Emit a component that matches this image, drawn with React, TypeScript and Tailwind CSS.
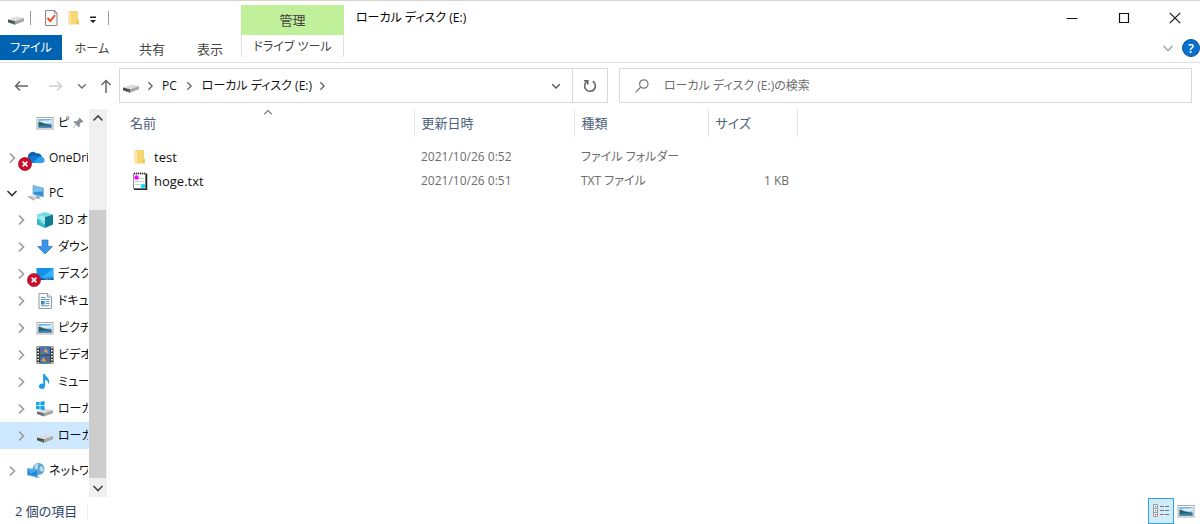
import type { ReactNode } from "react";

type IconProps = { className?: string };

function Chevron({ dir, className = "" }: { dir: "up" | "down" | "right"; className?: string }) {
  const d = { up: "M1.5 7.5 6 3l4.5 4.5", down: "M1.5 4 6 8.5 10.5 4", right: "M4 1.5 8.5 6 4 10.5" }[dir];
  return (
    <svg viewBox="0 0 12 12" className={`shrink-0 ${className}`} fill="none" stroke="currentColor" strokeWidth="1.6" aria-hidden="true">
      <path d={d} />
    </svg>
  );
}

function DriveIcon({ className = "h-[18px] w-[18px]" }: IconProps) {
  return (
    <svg viewBox="0 0 18 18" className={`shrink-0 ${className}`} aria-hidden="true">
      <path d="M1 10.5 9.5 7.500 17 9v1L8 12.200z" fill="#dcdddc" />
      <path d="M1 10.5 8 12.200v3.600l-7-2.600z" fill="#4a4e4b" />
      <path d="M8 12.200 17 9.200v3L8 15.800z" fill="#a6a7a6" />
      <path d="M5.500 13.200l1.500.4v1.200l-1.500-.5z" fill="#35c048" />
    </svg>
  );
}

function SystemDriveIcon() {
  return (
    <svg viewBox="0 0 18 18" className="h-[18px] w-[18px] shrink-0" aria-hidden="true">
      <path d="M1 11.5 9 8.5 17 10v1L8 13.2z" fill="#dcdcdc" />
      <path d="M1 11.5 8 13.2v3.3l-7-2.4z" fill="#6a6d6b" />
      <path d="M8 13.2 17 10.2v3L8 16.5z" fill="#a6a7a6" />
      <path d="M6 14l1.3.4v1L6 15z" fill="#35c048" />
      <path d="M0 2.3 3.6 1.8v3.5H0zM4.4 1.7 8.6 1v4.3H4.4zM0 6h3.6v3.5L0 9zM4.4 6h4.2v4.2l-4.2-.6z" fill="#0ea5e9" />
    </svg>
  );
}

function FolderIcon({ className = "h-4 w-4" }: IconProps) {
  return (
    <svg viewBox="0 0 16 16" className={`shrink-0 ${className}`} aria-hidden="true">
      <path d="M2.5 1H12v8.500l1 .5v4.500H3.2l-.7-.6z" fill="#f7d775" />
      <path d="M2.5 1 5 2.5v13l-2.5-1.7z" fill="#fbe7a5" />
      <path d="M11 9.5h2V14H9.500z" fill="#f1c95f" />
    </svg>
  );
}

function CheckSheetIcon() {
  return (
    <svg viewBox="0 0 16 18" className="h-[18px] w-4 shrink-0" aria-hidden="true">
      <path d="M2.5 1.5h9l2.5 2.5v12.5H2.5z" fill="#f8f8f8" stroke="#888" />
      <path d="M11.5 1.5V4H14" fill="none" stroke="#888" />
      <path d="M4.5 9 7.3 12 12 6.2" fill="none" stroke="#e8501c" strokeWidth="1.9" />
    </svg>
  );
}

function PictureIcon({ className = "h-[18px] w-[18px]" }: IconProps) {
  return (
    <svg viewBox="0 0 18 18" className={`shrink-0 ${className}`} aria-hidden="true">
      <rect x="1" y="3.5" width="16" height="11.5" fill="#fff" stroke="#a9a9a9" />
      <rect x="2.5" y="5" width="13" height="8.5" fill="#6fb4ea" />
      <path d="M2.5 7.5c4-2 8-.5 13-1.5v3.5h-13z" fill="#d8ecf7" />
      <path d="M2.5 7.800c3 0 6 2.700 13 2.900v2.8h-13z" fill="#2c5f62" />
      <path d="M2.5 12c5-1 9-1 13-.2v1.7h-13z" fill="#3a7fb8" />
    </svg>
  );
}

function ErrorBadge() {
  return (
    <svg viewBox="0 0 14 14" className="absolute -bottom-1 -left-[9px] h-3.5 w-3.5" aria-hidden="true">
      <circle cx="7" cy="7" r="6.6" fill="#c8102e" stroke="#a30d27" strokeWidth=".6" />
      <path d="m4.6 4.6 4.8 4.8m0-4.8L4.6 9.4" stroke="#fff" strokeWidth="1.5" />
    </svg>
  );
}

function CloudIcon() {
  return (
    <svg viewBox="0 0 18 18" className="h-[18px] w-[18px] shrink-0" aria-hidden="true">
      <path d="M1 9a5 5 0 0 1 8.5-4.5A4.5 4.5 0 0 1 15 8l-7 6H4a3.7 3.7 0 0 1-3-5z" fill="#0a62b8" />
      <path d="M5 7c3-1 5 0 7 1.5L6 14H4c-3 0-4-3-3-5z" fill="#1279d3" />
      <path d="M11 8.2c1.600-1.300 6-.7 6.600 2.800.2 1.800-1.300 3-2.600 3H6z" fill="#27a3ee" />
    </svg>
  );
}

function ComputerIcon() {
  return (
    <svg viewBox="0 0 18 18" className="h-[18px] w-[18px] shrink-0" aria-hidden="true">
      <path d="M6 1.500 16.500 4v9L6 10.500z" fill="#2f90da" stroke="#a8bccb" />
      <path d="M6.700 2.300 15.800 4.500v3L6.700 8z" fill="#74c1f4" />
      <path d="M9.500 11.500l3 .8v2l2 1-4-.6-2-1.200z" fill="#9aa6ae" />
      <path d="M.5 12.500 5 11.500l5.500 2.700-4 2.300z" fill="#c3ccd2" />
      <path d="M.5 12.500l6 4 .5-.5-6-4z" fill="#8b969e" />
    </svg>
  );
}

function CubeIcon() {
  return (
    <svg viewBox="0 0 18 18" className="h-[18px] w-[18px] shrink-0" aria-hidden="true">
      <path d="M1 3.500 9 1l8 2.500L9 6z" fill="#72dbe6" />
      <path d="M1 3.500 9 6v11l-8-3.500z" fill="#35b9cc" />
      <path d="M17 3.500 9 6v11l8-3.500z" fill="#117d95" />
      <path d="M1 3.500 9 6v4L1 8z" fill="#8de4ea" />
      <path d="M4.500 4.500 9 6v7.500l-4.500-2z" fill="#c5f2f5" opacity=".6" />
    </svg>
  );
}

function DownloadIcon() {
  return (
    <svg viewBox="0 0 18 18" className="h-[18px] w-[18px] shrink-0" aria-hidden="true">
      <path d="M6 2h6v6.500h4.500L9 16 1.500 8.500H6z" fill="#3b95e4" stroke="#2c7ac5" strokeWidth=".7" />
    </svg>
  );
}

function DesktopIcon() {
  return (
    <svg viewBox="0 0 18 18" className="h-[18px] w-[18px] shrink-0" aria-hidden="true">
      <rect x=".5" y="3" width="17" height="12" fill="#1491e8" />
      <path d="M17 3.500v8L5 13z" fill="#36b3f8" />
      <path d="M.5 13.500h17V15H.5z" fill="#0b5ba2" />
      <path d="M9 14h6" stroke="#bce3fb" strokeWidth=".8" strokeDasharray="1 1" />
    </svg>
  );
}

function DocumentIcon() {
  return (
    <svg viewBox="0 0 18 18" className="h-[18px] w-[18px] shrink-0" aria-hidden="true">
      <path d="M3 1.500h8.500L15.500 5v11.500H3z" fill="#fafafa" stroke="#929ba2" />
      <path d="M11.500 1.500V5h4" fill="#dfe6eb" stroke="#929ba2" />
      <path d="M5 5.500h4.500M5 7.500h8.500M9.500 9.500h4M9.500 11.500h4M5 13.800h8.500" stroke="#5d9ccc" strokeWidth="1.100" />
      <path d="M5 9h3.500v3.500H5z" fill="#3d86bf" />
    </svg>
  );
}

function FilmIcon() {
  return (
    <svg viewBox="0 0 18 18" className="h-[18px] w-[18px] shrink-0" aria-hidden="true">
      <path d="M.5.500h17v17H.5z" fill="#3a3a3a" />
      <path d="M4 .5h10v8H4z" fill="#3d78bd" />
      <path d="M4 9.500h10v8H4z" fill="#3a6cae" />
      <path d="M9.500 2 12.500 7 8 6zM5 15l3-4 2 5z" fill="#e9a13d" />
      <path d="M10 11l3 1-1 3zM5 2l2 1-1 3z" fill="#c94734" />
      <path d="M4 7h4v1.500H4zM10 16h4v1.500h-4z" fill="#4f9256" />
      <path d="M2.200 1v16M15.800 1v16" stroke="#eee" strokeWidth="1.700" strokeDasharray="1.600 1.400" />
    </svg>
  );
}

function MusicIcon() {
  return (
    <svg viewBox="0 0 18 18" className="h-[18px] w-[18px] shrink-0" aria-hidden="true">
      <path d="M7.200 1H9c.3 3 4.500 3.800 4.300 8-.1 1-.5 1.800-1 2.300.4-2.800-1.300-4-3.300-4.500v6.700a3 2.600 0 1 1-1.800-2.600z" fill="#189ded" />
    </svg>
  );
}

function NetworkIcon() {
  return (
    <svg viewBox="0 0 18 18" className="h-[18px] w-[18px] shrink-0" aria-hidden="true">
      <circle cx="11.500" cy="7" r="6" fill="#5aa3cf" />
      <path d="M7 3.500c2-2 4-2 5-1.500l-1.500 2.500 1 2-3 1zM13 4l3 1 1 3-2 2-2.500-2z" fill="#b5dcea" />
      <path d="M8 14h3.500l1.500 2H8z" fill="#b6bec4" />
      <path d="M.5 6.500 10.500 8v7L.5 13z" fill="#1f87da" stroke="#6fb2e0" strokeWidth=".8" />
      <path d="M1 7 10 8.500 3 12z" fill="#45a9f0" />
    </svg>
  );
}

function PinIcon() {
  return (
    <svg viewBox="0 0 12 12" className="h-3 w-3 shrink-0 text-[#84919c]" aria-hidden="true">
      <path d="M7.500.500 11.500 4.500l-1 .8-.8-.2-2 2 .1 2.300-1 .8L4.300 7.700 1 11.200.6 11 4 7.300 1.500 5l.9-.9 2.300.1 2.200-2-.2-.8z" fill="currentColor" />
    </svg>
  );
}

function TextFileIcon() {
  return (
    <svg viewBox="0 0 16 18" className="h-[18px] w-4 shrink-0" aria-hidden="true">
      <path d="M1.500 1.500h12v15h-12z" fill="#fff" stroke="#8c8c8c" />
      <path d="M14.500 1.500v16H2" fill="none" stroke="#222" strokeWidth="1.500" />
      <path d="M2 1.500h12" stroke="#444" strokeWidth="2" strokeDasharray="1 1" />
      <path d="M6 6.500h6M3 9.500h9M3 12.500h6" stroke="#ccc" />
      <circle cx="4.500" cy="5.500" r="2.200" fill="#f0f" />
      <circle cx="11" cy="14" r="2.200" fill="#00e5f5" />
    </svg>
  );
}

type TreeNode = {
  label: string;
  icon: ReactNode;
  level: 1 | 2;
  open?: boolean;
  error?: boolean;
  pinned?: boolean;
  selected?: boolean;
  space?: string;
};

const tree: TreeNode[] = [
  { label: "ピクチャ", icon: <PictureIcon />, level: 2, pinned: true },
  { label: "OneDrive", icon: <CloudIcon />, level: 1, error: true, space: "mt-2" },
  { label: "PC", icon: <ComputerIcon />, level: 1, open: true, space: "mt-2" },
  { label: "3D オブジェクト", icon: <CubeIcon />, level: 2 },
  { label: "ダウンロード", icon: <DownloadIcon />, level: 2 },
  { label: "デスクトップ", icon: <DesktopIcon />, level: 2, error: true },
  { label: "ドキュメント", icon: <DocumentIcon />, level: 2 },
  { label: "ピクチャ", icon: <PictureIcon />, level: 2 },
  { label: "ビデオ", icon: <FilmIcon />, level: 2 },
  { label: "ミュージック", icon: <MusicIcon />, level: 2 },
  { label: "ローカル ディスク (C:)", icon: <SystemDriveIcon />, level: 2 },
  { label: "ローカル ディスク (E:)", icon: <DriveIcon />, level: 2, selected: true },
  { label: "ネットワーク", icon: <NetworkIcon />, level: 1, space: "mt-2" },
];

function TreeRow({ node }: { node: TreeNode }) {
  return (
    <li className={node.space ?? ""}>
      <button
        type="button"
        className={`flex h-[27px] w-full items-center overflow-hidden pr-px text-left whitespace-nowrap ${node.level === 1 ? "pl-1.5" : "pl-[15px]"} ${node.selected ? "bg-[#cde8ff]" : ""}`}
      >
        {node.pinned ? (
          <span className="w-3 shrink-0" />
        ) : (
          <Chevron dir={node.open ? "down" : "right"} className={`h-3 w-3 ${node.open ? "text-[#333]" : "text-[#9a9a9a]"}`} />
        )}
        <span className="relative ml-[9px] shrink-0">
          {node.icon}
          {node.error && <ErrorBadge />}
        </span>
        <span className={`ml-1 overflow-hidden ${node.pinned ? "w-3 shrink-0" : ""}`}>{node.label}</span>
        {node.pinned && <span className="ml-0.5"><PinIcon /></span>}
      </button>
    </li>
  );
}

const files = [
  { name: "test", icon: <FolderIcon className="h-[18px] w-4" />, date: "2021/10/26 0:52", kind: "ファイル フォルダー", size: "" },
  { name: "hoge.txt", icon: <TextFileIcon />, date: "2021/10/26 0:51", kind: "TXT ファイル", size: "1 KB" },
];

const columns = [
  { label: "名前", width: "w-[292px]", pad: "pl-2" },
  { label: "更新日時", width: "w-[160px]", pad: "pl-[7px]" },
  { label: "種類", width: "w-[134px]", pad: "pl-[7px]" },
  { label: "サイズ", width: "w-[89px]", pad: "pl-[7px]" },
];

function Header() {
  return (
    <header className="flex h-[62px] border-b border-[#e4e4e4]">
      <div className="flex w-[241px] flex-col">
        <div className="flex h-[34px] items-center pl-[7px]">
          <DriveIcon />
          <span className="ml-[5px] h-3.5 w-px bg-[#999]" />
          <button type="button" aria-label="プロパティ" className="ml-3"><CheckSheetIcon /></button>
          <button type="button" aria-label="新しいフォルダー" className="ml-[7px]"><FolderIcon className="h-[18px] w-4" /></button>
          <button type="button" aria-label="クイック アクセス ツール バーのカスタマイズ" className="ml-[7px]">
            <svg viewBox="0 0 8 8" className="mt-1 h-2 w-2" aria-hidden="true">
              <path d="M1 .5h6V2H1zM1 4h6L4 7z" fill="#222" />
            </svg>
          </button>
          <span className="ml-[11px] h-3.5 w-px bg-[#999]" />
        </div>
        <div className="flex h-[25px] items-stretch text-[#444]">
          <button type="button" className="w-[62px] bg-[#0063b1] text-white">ファイル</button>
          <button type="button" className="w-[60px] pt-0.5">ホーム</button>
          <button type="button" className="w-[60px] pt-0.5 text-[13px]">共有</button>
          <button type="button" className="w-[56px] pt-0.5 text-[13px]">表示</button>
        </div>
      </div>
      <div className="mt-1 flex w-[103px] flex-col">
        <span className="flex h-[30px] items-center justify-center bg-[#c1f09b] text-[13px] text-[#444]">管理</span>
        <button type="button" className="h-[22px] border-x border-[#e0e0e0] pt-0.5 whitespace-nowrap text-[#444]">ドライブ ツール</button>
      </div>
      <div className="flex flex-1 flex-col">
        <div className="flex h-[34px] items-center pl-3 text-black">
          <h1 className="flex-1">ローカル ディスク (E:)</h1>
          <button type="button" aria-label="最小化" className="flex w-[52px] justify-center">
            <svg viewBox="0 0 12 12" className="h-3 w-3" aria-hidden="true"><path d="M.5 6.500h11" stroke="#111" /></svg>
          </button>
          <button type="button" aria-label="最大化" className="flex w-[52px] justify-center">
            <svg viewBox="0 0 12 12" className="h-3 w-3" aria-hidden="true"><path d="M1.500 1.500h9v9h-9z" fill="none" stroke="#111" strokeWidth="1.200" /></svg>
          </button>
          <button type="button" aria-label="閉じる" className="flex w-[50px] justify-center">
            <svg viewBox="0 0 12 12" className="h-3 w-3" aria-hidden="true"><path d="m.8.8 10.400 10.400m0-10.400L.8 11.200" stroke="#111" strokeWidth="1.200" /></svg>
          </button>
        </div>
        <div className="flex h-[26px] items-center justify-end">
          <button type="button" aria-label="リボンの展開" className="mr-2 text-[#aaa]"><Chevron dir="down" className="h-3 w-3" /></button>
          <button type="button" aria-label="ヘルプ" className="flex h-[18px] w-[18px] items-center justify-center rounded-full border border-[#0b559b] bg-[#0870cc] text-[13px] font-semibold text-white">?</button>
        </div>
      </div>
    </header>
  );
}

function AddressBar() {
  return (
    <div className="grid grid-cols-[119px_minmax(0,489fr)_11px_minmax(0,573fr)] items-center pt-[5px] pr-2 pb-1.5">
      <div className="flex items-center pl-3.5 text-[#666]">
        <button type="button" aria-label="戻る">
          <svg viewBox="0 0 14 14" className="h-3.5 w-3.5" fill="none" stroke="currentColor" strokeWidth="1.500" aria-hidden="true"><path d="M14 7H1.500M6 2.500 1.500 7 6 11.500" /></svg>
        </button>
        <button type="button" aria-label="進む" className="ml-[21px] text-[#d0d0d0]">
          <svg viewBox="0 0 14 14" className="h-3.5 w-3.5" fill="none" stroke="currentColor" strokeWidth="1.500" aria-hidden="true"><path d="M0 7h12.500M8 2.500 12.500 7 8 11.500" /></svg>
        </button>
        <button type="button" aria-label="最近表示した場所" className="ml-3.5"><Chevron dir="down" className="h-2.5 w-2.5" /></button>
        <button type="button" aria-label="上へ" className="ml-3">
          <svg viewBox="0 0 14 14" className="h-3.5 w-3.5" fill="none" stroke="currentColor" strokeWidth="1.500" aria-hidden="true"><path d="M7 14V1.500M2.500 6 7 1.500 11.500 6" /></svg>
        </button>
      </div>
      <nav aria-label="アドレス" className="flex h-[35px] items-stretch border border-[#d9d9d9]">
        <div className="flex flex-1 items-center pl-0.5 text-[#111]">
          <DriveIcon />
          <Chevron dir="right" className="ml-[5px] h-2.5 w-2.5 text-[#666]" />
          <button type="button" className="ml-[7px]">PC</button>
          <Chevron dir="right" className="ml-[7px] h-2.5 w-2.5 text-[#666]" />
          <button type="button" className="ml-2 whitespace-nowrap">ローカル ディスク (E:)</button>
          <Chevron dir="right" className="ml-[5px] h-2.5 w-2.5 text-[#666]" />
          <button type="button" aria-label="以前の場所" className="mr-[11px] ml-auto text-[#555]"><Chevron dir="down" className="h-2.5 w-2.5" /></button>
        </div>
        <button type="button" aria-label="最新の情報に更新" className="flex w-[35px] items-center justify-center border-l border-[#d9d9d9]">
          <svg viewBox="0 0 14 14" className="h-3.5 w-3.5" fill="none" stroke="#666" strokeWidth="1.600" aria-hidden="true">
            <path d="M9.800 2.300a5.400 5.400 0 1 1-5.800.1M1 1.700h3.800v3.800" />
          </svg>
        </button>
      </nav>
      <label className="col-start-4 flex h-[35px] items-center border border-[#d9d9d9] pl-[15px]">
        <svg viewBox="0 0 14 14" className="h-3.5 w-3.5 shrink-0" fill="none" stroke="#777" strokeWidth="1.200" aria-hidden="true">
          <circle cx="8.800" cy="5" r="4.200" /><path d="M5.800 8 .6 13.300" />
        </svg>
        <input type="search" aria-label="検索" placeholder="ローカル ディスク (E:)の検索" className="ml-[15px] min-w-0 flex-1 outline-none placeholder:text-[#6d6d6d]" />
      </label>
    </div>
  );
}

export default function App() {
  return (
    <div className="flex min-h-screen flex-col border-t border-[#d8d4cb] bg-white font-['Open_Sans','Noto_Sans_CJK_JP',sans-serif] text-[12px] leading-[18px] text-[#111] [font-feature-settings:'palt']">
      <Header />
      <AddressBar />
      <div className="flex flex-1">
        <aside className="flex w-[107px] shrink-0">
          <ul className="w-[89px] shrink-0">
            {tree.map((node, i) => <TreeRow key={i} node={node} />)}
          </ul>
          <div className="flex w-[18px] flex-col bg-[#f0f0f0] text-[#444]">
            <button type="button" aria-label="上にスクロール" className="flex h-[19px] items-center justify-center"><Chevron dir="up" className="h-3 w-3" /></button>
            <span className="flex-[82]" />
            <span className="mr-px flex-[268] bg-[#cdcdcd]" />
            <button type="button" aria-label="下にスクロール" className="flex h-[19px] items-center justify-center"><Chevron dir="down" className="h-3 w-3" /></button>
          </div>
        </aside>
        <main className="ml-0.5 flex-1 border-l border-[#f6f6f6] pl-3">
          <table className="table-fixed border-collapse text-left">
            <thead>
              <tr className="h-[28px]">
                {columns.map((c, i) => (
                  <th key={c.label} aria-sort={i === 0 ? "ascending" : undefined} className={`relative border-r border-[#e2e2e2] font-normal text-[#4c607a] ${c.width} ${c.pad} text-[13px]`}>
                    {c.label}
                    {i === 0 && <span className="absolute inset-x-0 -top-px flex justify-center text-[#888]"><Chevron dir="up" className="h-2.5 w-2.5" /></span>}
                  </th>
                ))}
              </tr>
            </thead>
            <tbody className="text-[#6d6d6d] before:block before:h-2">
              {files.map((f) => (
                <tr key={f.name} className="h-6">
                  <td className="pl-2.5">
                    <span className="flex items-center gap-1.5 text-[13px] text-[#111]">{f.icon}{f.name}</span>
                  </td>
                  <td className="pl-[7px]">{f.date}</td>
                  <td className="pl-[7px] whitespace-nowrap">{f.kind}</td>
                  <td className="pr-2 text-right">{f.size}</td>
                </tr>
              ))}
            </tbody>
          </table>
        </main>
      </div>
      <footer className="flex h-[27px] items-center pr-[5px]">
        <span className="pl-[15px] text-[13px] text-[#2c4364]">2 個の項目</span>
        <span className="ml-2.5 h-4 w-px bg-[#eee]" />
        <button type="button" aria-label="詳細" className="ml-auto flex h-[26px] w-[26px] items-center justify-center border border-[#2ea3dc] bg-[#d0ebf9]">
          <svg viewBox="0 0 18 18" className="h-[18px] w-[18px]" aria-hidden="true">
            <path d="M1.500 2.500h4v4h-4zM1.500 6.500h4v4h-4zM1.500 10.500h4v4h-4z" fill="#fff" stroke="#999" />
            <path d="M3 4h1.300v1.300H3z" fill="#3178c6" /><path d="M3 8h1.300v1.300H3z" fill="#8c7518" /><path d="M3 12h1.300v1.300H3z" fill="#c22" />
            <path d="M8 4.500h9M8 8.500h9M8 12.500h9" stroke="#777" strokeDasharray="4 1" />
          </svg>
        </button>
        <button type="button" aria-label="大アイコン" className="ml-[3px]"><PictureIcon /></button>
      </footer>
    </div>
  );
}
